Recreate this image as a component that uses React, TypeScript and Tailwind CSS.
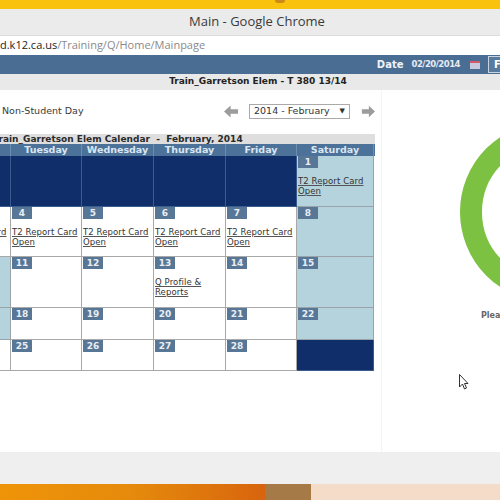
import React from "react";

type Cell = { d?: string; kind: "navy" | "white" | "blue"; lines?: string[] };

const T2 = ["T2 Report Card", "Open"];

const rows: { h: string; cells: Cell[] }[] = [
  {
    h: "h-[51px]",
    cells: [
      { kind: "navy" },
      { kind: "navy" },
      { kind: "navy" },
      { kind: "navy" },
      { kind: "navy" },
      { kind: "navy" },
      { d: "1", kind: "blue", lines: T2 },
    ],
  },
  {
    h: "h-[50px]",
    cells: [
      { d: "2", kind: "blue" },
      { d: "3", kind: "white", lines: T2 },
      { d: "4", kind: "white", lines: T2 },
      { d: "5", kind: "white", lines: T2 },
      { d: "6", kind: "white", lines: T2 },
      { d: "7", kind: "white", lines: T2 },
      { d: "8", kind: "blue" },
    ],
  },
  {
    h: "h-[51px]",
    cells: [
      { d: "9", kind: "blue" },
      { d: "10", kind: "blue" },
      { d: "11", kind: "white" },
      { d: "12", kind: "white" },
      { d: "13", kind: "white", lines: ["Q Profile &", "Reports"] },
      { d: "14", kind: "white" },
      { d: "15", kind: "blue" },
    ],
  },
  {
    h: "h-[32px]",
    cells: [
      { d: "16", kind: "blue" },
      { d: "17", kind: "blue" },
      { d: "18", kind: "white" },
      { d: "19", kind: "white" },
      { d: "20", kind: "white" },
      { d: "21", kind: "white" },
      { d: "22", kind: "blue" },
    ],
  },
  {
    h: "h-[31px]",
    cells: [
      { d: "23", kind: "blue" },
      { d: "24", kind: "white" },
      { d: "25", kind: "white" },
      { d: "26", kind: "white" },
      { d: "27", kind: "white" },
      { d: "28", kind: "white" },
      { kind: "navy" },
    ],
  },
];

const days = ["Sunday", "Monday", "Tuesday", "Wednesday", "Thursday", "Friday", "Saturday"];

function CalCell({ c }: { c: Cell }) {
  const bg =
    c.kind === "navy"
      ? "bg-[#0f2e6a] border-[#3a5b8e]"
      : c.kind === "blue"
      ? "bg-[#b5d3dc] border-[#9aa3a8]"
      : "bg-white border-[#a8a8a8]";
  return (
    <div className={`border-r border-b ${bg} flex flex-col items-start pl-px`}>
      {c.d && (
        <div className="w-[20px] h-[12px] bg-[#587797] text-[#e8eef4] text-[9px] font-bold leading-[12px] text-center">
          {c.d}
        </div>
      )}
      {c.lines && (
        <div className="mt-[8px] text-[8.5px] tracking-[0.1px] leading-[10px] text-[#333] underline decoration-[#555] whitespace-nowrap">
          {c.lines.map((l) => (
            <div key={l}>{l}</div>
          ))}
        </div>
      )}
    </div>
  );
}

export default function App() {
  return (
    <div
      className="relative w-[500px] h-[500px] overflow-hidden bg-white flex flex-col"
      style={{ fontFamily: '"DejaVu Sans", Verdana, sans-serif' }}
    >
      {/* top yellow */}
      <div className="h-[9px] bg-[#f9c20c] flex justify-center shrink-0">
        <div className="ml-[60px] w-[10px] h-[3px] bg-[#c98a1a] rounded-b-sm" />
      </div>
      {/* title bar */}
      <div
        className="h-[26px] bg-[#ebebeb] flex items-center justify-center shrink-0 text-[13px] text-[#3a3a3a] pl-[14px]"
        style={{ fontFamily: '"Open Sans", "Noto Sans", sans-serif' }}
      >
        Main - Google Chrome
      </div>
      {/* address */}
      <div
        className="h-[20px] bg-white flex items-center shrink-0 text-[11px] border-t border-[#dcdcdc]"
        style={{ fontFamily: '"Open Sans", "Noto Sans", sans-serif' }}
      >
        <span className="text-[#222]">d.k12.ca.us</span>
        <span className="text-[#8a8a8a]">/Training/Q/Home/Mainpage</span>
      </div>
      {/* blue header */}
      <div className="h-[19px] bg-[#4a6d94] flex items-center justify-end shrink-0 text-white">
        <span className="text-[10px] font-bold mr-[8px] text-[#eef3f8]">Date</span>
        <span className="text-[8.5px] font-bold tracking-[-0.5px] text-[#e4ecf4]">02/20/2014</span>
        <div className="ml-[10px] w-[10px] h-[8px] bg-[#c9c9dd] border-t-[2px] border-[#d05a6a]" />
        <div className="ml-[8px] w-[12px] h-[17px] border border-[#c8d4e0] border-r-0 bg-[#5a7ba0] flex items-center pl-[5px] text-[10px] font-bold">
          F
        </div>
      </div>
      {/* school bar */}
      <div className="h-[16px] bg-[#e9e9e9] flex items-center justify-center shrink-0 text-[9px] font-bold text-[#222] pl-[16px]">
        Train_Garretson Elem - T 380 13/14
      </div>

      {/* content */}
      <div className="flex-1 flex min-h-0">
        <div className="w-[381px] shrink-0 flex flex-col">
          {/* legend and nav */}
          <div className="h-[44px] flex items-center pb-[2px]">
            <div className="w-[224px] shrink-0 pl-[2px] text-[9.5px] text-[#3a3a3a] whitespace-nowrap">
              Non-Student Day
            </div>
            <svg width="15" height="13" viewBox="0 0 16 13" className="shrink-0">
              <path d="M0 6.5 L7 0 V4 H15 V9 H7 V13 Z" fill="#9c9c9c" />
            </svg>
            <div className="ml-[10px] w-[101px] h-[15px] shrink-0 border border-[#aaa] flex items-center justify-between px-[4px] text-[9.5px] text-[#333]">
              <span className="whitespace-nowrap">2014 - February</span>
              <span className="text-[7px]">▼</span>
            </div>
            <svg className="ml-[11px] shrink-0" width="14" height="13" viewBox="0 0 16 13">
              <path d="M16 6.5 L9 0 V4 H1 V9 H9 V13 Z" fill="#9c9c9c" />
            </svg>
          </div>
          {/* calendar */}
          <div className="ml-[-137px] w-[512px] flex flex-col">
            <div className="h-[10px] bg-[#dedede] flex items-center justify-center text-[9px] font-bold text-[#2a2a2a] whitespace-pre pr-[2px] leading-[10px]">
              {"Train_Garretson Elem Calendar  -  February, 2014"}
            </div>
            <div className="grid grid-cols-[77px_71px_71px_72px_72px_71px_77px] h-[12px] bg-[#4d7299]">
              {days.map((d) => (
                <div
                  key={d}
                  className="text-center text-[9.5px] font-bold leading-[12px] text-[#dbe6f1] border-r border-[#6d8db0]"
                >
                  {d}
                </div>
              ))}
            </div>
            {rows.map((r, i) => (
              <div key={i} className={`grid grid-cols-[77px_71px_71px_72px_72px_71px_77px] ${r.h}`}>
                {r.cells.map((c, j) => (
                  <CalCell key={j} c={c} />
                ))}
              </div>
            ))}
          </div>
        </div>
        {/* right panel */}
        <div className="flex-1 border-l border-[#f4f4f4] flex flex-col min-w-0">
          <div className="ml-[78px] mt-[32px] w-[180px] h-[180px] shrink-0 rounded-full border-[22px] border-[#7dc142]" />
          <div className="ml-[99px] mt-[8px] text-[8px] font-bold text-[#666] whitespace-nowrap">
            Please wait...
          </div>
        </div>
      </div>

      {/* bottom gray */}
      <div className="h-[32px] bg-[#efefef] shrink-0" />
      {/* taskbar */}
      <div className="h-[16px] shrink-0 flex">
        <div className="w-[265px] bg-gradient-to-r from-[#ef9408] via-[#e58a0c] to-[#d8640e]" />
        <div className="w-[46px] bg-[#a67a46]" />
        <div className="flex-1 bg-[#f4dcc8]" />
      </div>

      {/* cursor */}
      <svg className="absolute left-[459px] top-[374px]" width="10" height="16" viewBox="0 0 10 16">
        <path d="M0.5 0.5 V13 L3.5 10 L5.5 15 L7.5 14 L5.5 9.5 H9 Z" fill="white" stroke="#333" strokeWidth="1" />
      </svg>
    </div>
  );
}
